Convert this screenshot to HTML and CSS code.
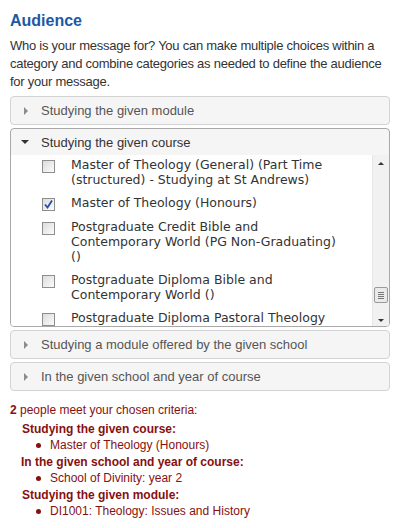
FILE: index.html
```html
<!DOCTYPE html>
<html lang="en">
<head>
  <meta charset="UTF-8">
  <title>Audience</title>
  <link rel="stylesheet" href="styles.css">
</head>
<body>
  <div class="audience">
    <h2>Audience</h2>
    <p class="intro">Who is your message for? You can make multiple choices within a category and combine categories as needed to define the audience for your message.</p>

    <div class="panel">
      <div class="panel-head"><span class="arrow closed"></span>Studying the given module</div>
    </div>

    <div class="panel open">
      <div class="panel-head"><span class="arrow down"></span>Studying the given course</div>
      <div class="panel-body">
        <div class="choices">
          <div class="choice">
            <span class="box"></span>
            <span class="label">Master of Theology (General) (Part Time (structured) - Studying at St Andrews)</span>
          </div>
          <div class="choice">
            <span class="box checked">
              <svg width="11" height="11" viewBox="0 0 11 11"><path d="M2 5.5 L4.5 8.5 L9 1.5" fill="none" stroke="#2b4aa8" stroke-width="1.8"/></svg>
            </span>
            <span class="label">Master of Theology (Honours)</span>
          </div>
          <div class="choice">
            <span class="box"></span>
            <span class="label">Postgraduate Credit Bible and Contemporary World (PG Non-Graduating) ()</span>
          </div>
          <div class="choice">
            <span class="box"></span>
            <span class="label">Postgraduate Diploma Bible and Contemporary World ()</span>
          </div>
          <div class="choice">
            <span class="box"></span>
            <span class="label">Postgraduate Diploma Pastoral Theology</span>
          </div>
        </div>
        <!-- fake scrollbar, list is scrolled near the bottom -->
        <div class="scrollbar">
          <span class="sb-arrow up"></span>
          <div class="sb-track">
            <div class="sb-thumb"><i></i><i></i><i></i><i></i></div>
          </div>
          <span class="sb-arrow dn"></span>
        </div>
      </div>
    </div>

    <div class="panel">
      <div class="panel-head"><span class="arrow closed"></span>Studying a module offered by the given school</div>
    </div>

    <div class="panel">
      <div class="panel-head"><span class="arrow closed"></span>In the given school and year of course</div>
    </div>

    <div class="summary">
      <p><b>2</b> people meet your chosen criteria:</p>
      <dl>
        <dt>Studying the given course:</dt>
        <dd>Master of Theology (Honours)</dd>
        <dt class="tight">In the given school and year of course:</dt>
        <dd>School of Divinity: year 2</dd>
        <dt>Studying the given module:</dt>
        <dd>DI1001: Theology: Issues and History</dd>
      </dl>
    </div>
  </div>
</body>
</html>
```

FILE: styles.css
```css
body {
  margin: 0;
  background: #fff;
  font-family: "Liberation Sans", Arial, sans-serif;
  color: #333;
}

.audience {
  width: 380px;
  margin-left: 10px;
  padding-top: 10px;
}

.audience h2 {
  margin: 0;
  font-size: 16px;
  line-height: 22px;
  color: #1b59a6;
}

.intro {
  margin: 5px 0 5px;
  font-size: 13px;
  line-height: 18px;
  letter-spacing: -0.25px;
}

.panel {
  border: 1px solid #d3d3d3;
  border-radius: 4px;
  background: #f5f5f5;
  margin-bottom: 3px;
  overflow: hidden;
}

.panel.open {
  border-color: #a9a9a9;
}

.panel-head {
  height: 27px;
  display: flex;
  align-items: center;
  font-size: 13px;
  color: #555;
}

.panel.open .panel-head {
  color: #333;
  height: 26px;
}

.arrow {
  width: 30px;
  height: 10px;
  display: flex;
  align-items: center;
  justify-content: center;
  flex: none;
}

.arrow.closed::before {
  content: "";
  border-left: 4px solid #8c8c8c;
  border-top: 4px solid transparent;
  border-bottom: 4px solid transparent;
  margin-left: -1px;
}

.arrow.down::before {
  content: "";
  border-top: 4px solid #333;
  border-left: 4px solid transparent;
  border-right: 4px solid transparent;
  margin-left: -2px;
}

.panel-body {
  height: 171px;
  background: #fff;
  display: flex;
  overflow: hidden;
}

.choices {
  flex: 1;
  padding: 2px 28px 0 0;
  font-family: "DejaVu Sans", Verdana, sans-serif;
  font-size: 12.5px;
  line-height: 15px;
  color: #333;
}

.choice {
  display: flex;
  padding: 0 0 8px 31px;
}

.box {
  width: 11px;
  height: 11px;
  margin-top: 3px;
  margin-right: 16px;
  flex: none;
  border: 1px solid #8e8e8e;
  background: linear-gradient(135deg, #dcdcdc, #fbfbfb);
  display: flex;
  align-items: center;
  justify-content: center;
}

.box.checked svg {
  display: block;
}

.scrollbar {
  width: 16px;
  flex: none;
  background: #f1f1f1;
  border-left: 1px solid #e6e6e6;
  display: flex;
  flex-direction: column;
  align-items: center;
}

.sb-arrow {
  height: 17px;
  display: flex;
  align-items: center;
  justify-content: center;
}

.sb-arrow.dn {
  height: 12px;
}

.sb-arrow::before {
  content: "";
  border-left: 3px solid transparent;
  border-right: 3px solid transparent;
}

.sb-arrow.up::before {
  border-bottom: 3px solid #333;
}

.sb-arrow.dn::before {
  border-top: 3px solid #333;
}

.sb-track {
  flex: 1;
  width: 100%;
  display: flex;
  flex-direction: column;
  justify-content: flex-end;
  padding-bottom: 11px;
  box-sizing: border-box;
}

.sb-thumb {
  height: 14px;
  margin: 0 1px;
  border: 1px solid #9a9a9a;
  border-radius: 2px;
  background: #eaeaea;
  display: flex;
  flex-direction: column;
  justify-content: center;
  gap: 1px;
  padding: 0 3px;
}

.sb-thumb i {
  display: block;
  height: 1px;
  background: #777;
}

.summary {
  margin-top: 11px;
  font-size: 12px;
  color: #861010;
}

.summary p {
  margin: 0 0 2px;
  line-height: 16px;
}

.summary dl {
  margin: 0;
}

.summary dt {
  font-weight: bold;
  line-height: 18px;
  padding-left: 12px;
}

.summary dt.tight {
  padding-left: 11px;
}

.summary dd {
  margin: 0;
  line-height: 15px;
  padding-left: 26px;
  display: flex;
  align-items: center;
}

.summary dd::before {
  content: "";
  width: 5px;
  height: 5px;
  border-radius: 50%;
  background: #861010;
  margin-right: 9px;
  flex: none;
}
```
